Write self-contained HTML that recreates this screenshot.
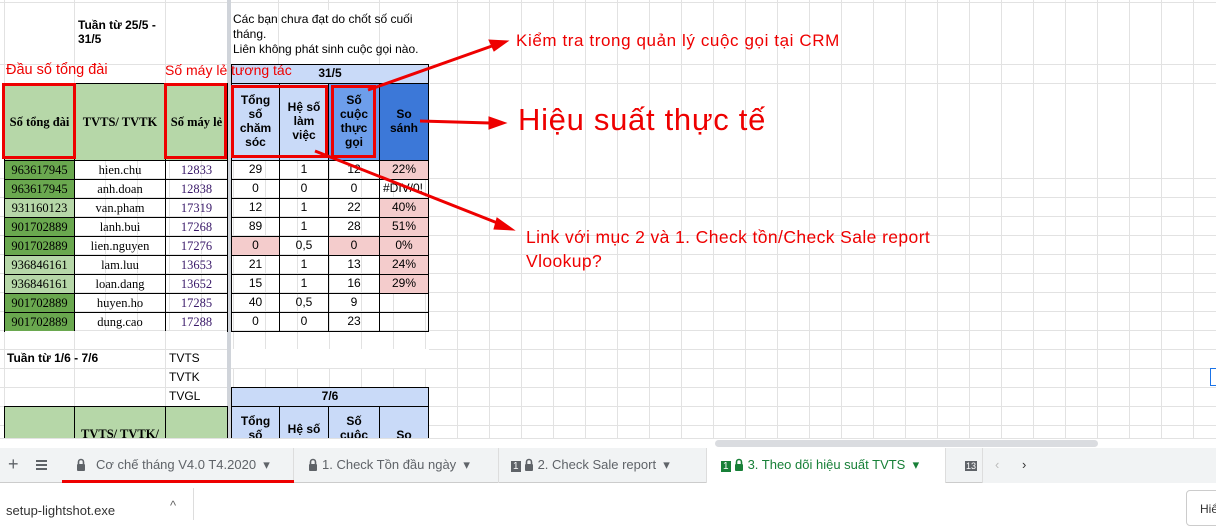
<!DOCTYPE html><html><head><meta charset="utf-8"><style>
*{margin:0;padding:0;box-sizing:border-box}
body{width:1216px;height:520px;overflow:hidden;background:#fff;position:relative;font-family:"Liberation Sans",sans-serif}
.grid{position:absolute;left:0;top:0;width:1216px;height:438px;
background-image:repeating-linear-gradient(to right,transparent 0 31px,#e2e2e2 31px 32px),repeating-linear-gradient(to bottom,transparent 0 18px,#e2e2e2 18px 19px);
background-position:426px 160px,0 160px;}
.c{position:absolute;display:flex;align-items:center;justify-content:center;text-align:center;font-size:12px;color:#000;overflow:hidden;line-height:1.15}
.s{font-family:"Liberation Serif",serif;font-size:12.5px}
.b{border:1px solid #000}
.ann{position:absolute;color:#e00;font-family:"Liberation Sans",sans-serif;white-space:nowrap}
.box{position:absolute;border:3px solid #e00}
.lk{display:inline-block;width:10px;height:13px;vertical-align:-2px;margin-right:4px}
</style></head><body>
<div class="grid"></div>
<div style="position:absolute;left:0;top:0;width:1216px;height:160px;background:#fff"></div>
<div style="position:absolute;left:0;top:2px;width:1216px;height:1px;background:#e2e2e2"></div>
<div style="position:absolute;left:0;top:64px;width:1216px;height:1px;background:#e2e2e2"></div>
<div style="position:absolute;left:0;top:83px;width:1216px;height:1px;background:#e2e2e2"></div>
<div style="position:absolute;left:0;top:0;width:1216px;height:160px;background-image:repeating-linear-gradient(to right,transparent 0 31px,#e2e2e2 31px 32px);background-position:426px 0"></div>
<div style="position:absolute;left:0;top:0;width:430px;height:160px;background:#fff"></div>
<div style="position:absolute;left:4px;top:0;width:1px;height:438px;background:#e2e2e2"></div>
<div style="position:absolute;left:74px;top:0;width:1px;height:84px;background:#e2e2e2"></div>
<div style="position:absolute;left:165px;top:0;width:1px;height:84px;background:#e2e2e2"></div>
<div style="position:absolute;left:0;top:2px;width:430px;height:1px;background:#e2e2e2"></div>
<div style="position:absolute;left:0;top:64px;width:430px;height:1px;background:#e2e2e2"></div>
<div style="position:absolute;left:278px;top:0;width:1px;height:64px;background:#e2e2e2"></div>
<div style="position:absolute;left:328px;top:0;width:1px;height:10px;background:#e2e2e2"></div>
<div style="position:absolute;left:379px;top:0;width:1px;height:64px;background:#e2e2e2"></div>
<div style="position:absolute;left:227px;top:0;width:4px;height:438px;background:#d0d4da"></div>

<div class="c" style="left:78px;top:15px;width:90px;height:36px;justify-content:flex-start;text-align:left;font-weight:bold">Tuần từ 25/5 -<br>31/5</div>
<div class="c" style="left:233px;top:10px;width:200px;height:48px;justify-content:flex-start;text-align:left;font-size:12px;line-height:15px">Các bạn chưa đạt do chốt số cuối<br>tháng.<br>Liên không phát sinh cuộc gọi nào.</div>

<div class="c b" style="left:231px;top:64px;width:198px;height:20px;background:#c9daf8;font-weight:bold">31/5</div>
<div class="c b s" style="left:4px;top:83px;width:71px;height:78px;background:#b6d7a8;font-weight:bold">Số tổng đài</div>
<div class="c b s" style="left:74px;top:83px;width:92px;height:78px;background:#b6d7a8;font-weight:bold">TVTS/ TVTK</div>
<div class="c b s" style="left:165px;top:83px;width:63px;height:78px;background:#b6d7a8;font-weight:bold">Số máy lẻ</div>
<div class="c b" style="left:231px;top:83px;width:49px;height:78px;background:#c9daf8;font-weight:bold">Tổng<br>số<br>chăm<br>sóc</div>
<div class="c b" style="left:279px;top:83px;width:50px;height:78px;background:#c9daf8;font-weight:bold">Hệ số<br>làm<br>việc</div>
<div class="c b" style="left:328px;top:83px;width:52px;height:78px;background:#6d9eeb;font-weight:bold">Số<br>cuộc<br>thực<br>gọi</div>
<div class="c b" style="left:379px;top:83px;width:50px;height:78px;background:#3c78d8;font-weight:bold">So<br>sánh</div>

<div class="c b s" style="left:4px;top:160px;width:71px;height:20px;background:#6aa84f">963617945</div><div class="c b s" style="left:74px;top:160px;width:92px;height:20px">hien.chu</div><div class="c b s" style="left:165px;top:160px;width:63px;height:20px;color:#3a1a6a">12833</div><div class="c b" style="left:231px;top:160px;width:49px;height:20px">29</div><div class="c b" style="left:279px;top:160px;width:50px;height:20px">1</div><div class="c b" style="left:328px;top:160px;width:52px;height:20px">12</div><div class="c b" style="left:379px;top:160px;width:50px;height:20px;background:#f4cccc">22%</div>
<div class="c b s" style="left:4px;top:179px;width:71px;height:20px;background:#6aa84f">963617945</div><div class="c b s" style="left:74px;top:179px;width:92px;height:20px">anh.doan</div><div class="c b s" style="left:165px;top:179px;width:63px;height:20px;color:#3a1a6a">12838</div><div class="c b" style="left:231px;top:179px;width:49px;height:20px">0</div><div class="c b" style="left:279px;top:179px;width:50px;height:20px">0</div><div class="c b" style="left:328px;top:179px;width:52px;height:20px">0</div><div class="c b" style="left:379px;top:179px;width:50px;height:20px;justify-content:flex-start;padding-left:3px">#DIV/0!</div>
<div class="c b s" style="left:4px;top:198px;width:71px;height:20px;background:#b6d7a8">931160123</div><div class="c b s" style="left:74px;top:198px;width:92px;height:20px">van.pham</div><div class="c b s" style="left:165px;top:198px;width:63px;height:20px;color:#3a1a6a">17319</div><div class="c b" style="left:231px;top:198px;width:49px;height:20px">12</div><div class="c b" style="left:279px;top:198px;width:50px;height:20px">1</div><div class="c b" style="left:328px;top:198px;width:52px;height:20px">22</div><div class="c b" style="left:379px;top:198px;width:50px;height:20px;background:#f4cccc">40%</div>
<div class="c b s" style="left:4px;top:217px;width:71px;height:20px;background:#6aa84f">901702889</div><div class="c b s" style="left:74px;top:217px;width:92px;height:20px">lanh.bui</div><div class="c b s" style="left:165px;top:217px;width:63px;height:20px;color:#3a1a6a">17268</div><div class="c b" style="left:231px;top:217px;width:49px;height:20px">89</div><div class="c b" style="left:279px;top:217px;width:50px;height:20px">1</div><div class="c b" style="left:328px;top:217px;width:52px;height:20px">28</div><div class="c b" style="left:379px;top:217px;width:50px;height:20px;background:#f4cccc">51%</div>
<div class="c b s" style="left:4px;top:236px;width:71px;height:20px;background:#6aa84f">901702889</div><div class="c b s" style="left:74px;top:236px;width:92px;height:20px">lien.nguyen</div><div class="c b s" style="left:165px;top:236px;width:63px;height:20px;color:#3a1a6a">17276</div><div class="c b" style="left:231px;top:236px;width:49px;height:20px;background:#f4cccc">0</div><div class="c b" style="left:279px;top:236px;width:50px;height:20px">0,5</div><div class="c b" style="left:328px;top:236px;width:52px;height:20px;background:#f4cccc">0</div><div class="c b" style="left:379px;top:236px;width:50px;height:20px;background:#f4cccc">0%</div>
<div class="c b s" style="left:4px;top:255px;width:71px;height:20px;background:#b6d7a8">936846161</div><div class="c b s" style="left:74px;top:255px;width:92px;height:20px">lam.luu</div><div class="c b s" style="left:165px;top:255px;width:63px;height:20px;color:#3a1a6a">13653</div><div class="c b" style="left:231px;top:255px;width:49px;height:20px">21</div><div class="c b" style="left:279px;top:255px;width:50px;height:20px">1</div><div class="c b" style="left:328px;top:255px;width:52px;height:20px">13</div><div class="c b" style="left:379px;top:255px;width:50px;height:20px;background:#f4cccc">24%</div>
<div class="c b s" style="left:4px;top:274px;width:71px;height:20px;background:#b6d7a8">936846161</div><div class="c b s" style="left:74px;top:274px;width:92px;height:20px">loan.dang</div><div class="c b s" style="left:165px;top:274px;width:63px;height:20px;color:#3a1a6a">13652</div><div class="c b" style="left:231px;top:274px;width:49px;height:20px">15</div><div class="c b" style="left:279px;top:274px;width:50px;height:20px">1</div><div class="c b" style="left:328px;top:274px;width:52px;height:20px">16</div><div class="c b" style="left:379px;top:274px;width:50px;height:20px;background:#f4cccc">29%</div>
<div class="c b s" style="left:4px;top:293px;width:71px;height:20px;background:#6aa84f">901702889</div><div class="c b s" style="left:74px;top:293px;width:92px;height:20px">huyen.ho</div><div class="c b s" style="left:165px;top:293px;width:63px;height:20px;color:#3a1a6a">17285</div><div class="c b" style="left:231px;top:293px;width:49px;height:20px">40</div><div class="c b" style="left:279px;top:293px;width:50px;height:20px">0,5</div><div class="c b" style="left:328px;top:293px;width:52px;height:20px">9</div><div class="c b" style="left:379px;top:293px;width:50px;height:20px"></div>
<div class="c b s" style="left:4px;top:312px;width:71px;height:20px;background:#6aa84f">901702889</div><div class="c b s" style="left:74px;top:312px;width:92px;height:20px">dung.cao</div><div class="c b s" style="left:165px;top:312px;width:63px;height:20px;color:#3a1a6a">17288</div><div class="c b" style="left:231px;top:312px;width:49px;height:20px">0</div><div class="c b" style="left:279px;top:312px;width:50px;height:20px">0</div><div class="c b" style="left:328px;top:312px;width:52px;height:20px">23</div><div class="c b" style="left:379px;top:312px;width:50px;height:20px"></div>

<div style="position:absolute;left:5px;top:331px;width:222px;height:107px;background:#fff;background-image:linear-gradient(#e2e2e2,#e2e2e2),linear-gradient(#e2e2e2,#e2e2e2),linear-gradient(to bottom,transparent 0 18px,#e2e2e2 18px 19px,transparent 19px 37px,#e2e2e2 37px 38px,transparent 38px 56px,#e2e2e2 56px 57px,transparent 57px 75px,#e2e2e2 75px 76px);background-size:1px 100%,1px 100%,100% 100%;background-position:69px 0,160px 0,0 0;background-repeat:no-repeat"></div>
<div style="position:absolute;left:231px;top:349px;width:198px;height:19px;background:#fff"></div>
<div class="c" style="left:7px;top:350px;width:120px;height:18px;justify-content:flex-start;font-weight:bold">Tuần từ 1/6 - 7/6</div>
<div class="c" style="left:169px;top:350px;width:50px;height:18px;justify-content:flex-start">TVTS</div>
<div class="c" style="left:169px;top:369px;width:50px;height:18px;justify-content:flex-start">TVTK</div>
<div class="c" style="left:169px;top:388px;width:50px;height:18px;justify-content:flex-start">TVGL</div>
<div class="c b" style="left:231px;top:387px;width:198px;height:20px;background:#c9daf8;font-weight:bold">7/6</div>
<div class="c b s" style="left:4px;top:406px;width:71px;height:40px;background:#b6d7a8"></div>
<div class="c b s" style="left:74px;top:406px;width:92px;height:40px;background:#b6d7a8;font-weight:bold;align-items:flex-start;padding-top:20px">TVTS/ TVTK/</div>
<div class="c b s" style="left:165px;top:406px;width:63px;height:40px;background:#b6d7a8"></div>
<div class="c b" style="left:231px;top:406px;width:49px;height:40px;background:#c9daf8;font-weight:bold;align-items:flex-start;padding-top:8px">Tổng<br>số</div>
<div class="c b" style="left:279px;top:406px;width:50px;height:40px;background:#c9daf8;font-weight:bold;align-items:flex-start;padding-top:16px">Hệ số</div>
<div class="c b" style="left:328px;top:406px;width:52px;height:40px;background:#c9daf8;font-weight:bold;align-items:flex-start;padding-top:8px">Số<br>cuộc</div>
<div class="c b" style="left:379px;top:406px;width:50px;height:40px;background:#c9daf8;font-weight:bold;align-items:flex-start;padding-top:22px">So</div>
<div style="position:absolute;left:1210px;top:368px;width:6px;height:18px;border:1px solid #1a73e8;border-right:none"></div>

<div style="position:absolute;left:0;top:438px;width:1216px;height:10px;background:#fff;border-top:1px solid #e2e2e2"></div>
<div style="position:absolute;left:715px;top:440px;width:383px;height:7px;background:#dadce0;border-radius:4px"></div>
<div style="position:absolute;left:0;top:448px;width:1216px;height:35px;background:#f1f3f4;border-bottom:1px solid #ccc;font-size:13px;color:#5f6368">
 <div style="position:absolute;left:8px;top:6px;font-size:18px">+</div>
 <div style="position:absolute;left:36px;top:12px;width:11px;height:2px;background:#5f6368;box-shadow:0 4px 0 #5f6368,0 8px 0 #5f6368"></div>
 <div style="position:absolute;left:62px;top:0;width:232px;height:35px;border-right:1px solid #ddd"></div>
 <div style="position:absolute;left:62px;top:32px;width:232px;height:3px;background:#e00"></div>
 <div style="position:absolute;left:76px;top:9px"><svg class="lk" viewBox="0 0 10 13"><path d="M2.5 6V4a2.5 2.5 0 0 1 5 0v2" fill="none" stroke="#5f6368" stroke-width="1.6"/><rect x="1" y="6" width="8" height="7" rx="1" fill="#5f6368"/></svg></div>
 <div style="position:absolute;left:96px;top:9px">Cơ chế tháng V4.0 T4.2020 &nbsp;▾</div>
 <div style="position:absolute;left:308px;top:9px"><svg class="lk" viewBox="0 0 10 13"><path d="M2.5 6V4a2.5 2.5 0 0 1 5 0v2" fill="none" stroke="#5f6368" stroke-width="1.6"/><rect x="1" y="6" width="8" height="7" rx="1" fill="#5f6368"/></svg>1. Check Tồn đầu ngày &nbsp;▾</div>
 <div style="position:absolute;left:498px;top:0;width:1px;height:35px;background:#ddd"></div>
 <div style="position:absolute;left:511px;top:9px"><span style="background:#5f6368;color:#fff;font-size:10px;padding:0 2px;margin-right:3px">1</span><svg class="lk" viewBox="0 0 10 13"><path d="M2.5 6V4a2.5 2.5 0 0 1 5 0v2" fill="none" stroke="#5f6368" stroke-width="1.6"/><rect x="1" y="6" width="8" height="7" rx="1" fill="#5f6368"/></svg>2. Check Sale report &nbsp;▾</div>
 <div style="position:absolute;left:706px;top:0;width:240px;height:35px;background:#fff;border-left:1px solid #ddd;border-right:1px solid #ddd"></div>
 <div style="position:absolute;left:721px;top:9px;color:#188038"><span style="background:#188038;color:#fff;font-size:10px;padding:0 2px;margin-right:3px">1</span><svg class="lk" viewBox="0 0 10 13"><path d="M2.5 6V4a2.5 2.5 0 0 1 5 0v2" fill="none" stroke="#188038" stroke-width="1.6"/><rect x="1" y="6" width="8" height="7" rx="1" fill="#188038"/></svg>3. Theo dõi hiệu suất TVTS &nbsp;▾</div>
 <div style="position:absolute;left:965px;top:9px"><span style="background:#5f6368;color:#fff;font-size:9px;padding:0 1px">13</span></div>
 <div style="position:absolute;left:982px;top:0;width:234px;height:35px;background:#f1f3f4;border-left:1px solid #ddd"></div>
 <div style="position:absolute;left:995px;top:9px;color:#bbb">‹</div>
 <div style="position:absolute;left:1022px;top:9px;color:#333">›</div>
</div>
<div style="position:absolute;left:0;top:484px;width:1216px;height:36px;background:#fff;font-size:13px;color:#333">
 <div style="position:absolute;left:6px;top:19px">setup-lightshot.exe</div>
 <div style="position:absolute;left:170px;top:14px;color:#666">^</div>
 <div style="position:absolute;left:193px;top:4px;width:1px;height:32px;background:#ddd"></div>
 <div style="position:absolute;left:1186px;top:6px;width:40px;height:36px;border:1px solid #ccc;border-radius:4px;padding:11px 0 0 13px;font-size:12px">Hiể</div>
</div>

<div class="ann" style="left:6px;top:62px;font-size:14.5px">Đầu số tổng đài</div>
<div class="ann" style="left:165px;top:62px;font-size:14px">Số máy lẻ tương tác</div>
<div class="ann" style="left:516px;top:31px;font-size:17px;letter-spacing:0.6px">Kiểm tra trong quản lý cuộc gọi tại CRM</div>
<div class="ann" style="left:518px;top:102px;font-size:31px;letter-spacing:0.7px">Hiệu suất thực tế</div>
<div class="ann" style="left:526px;top:225px;font-size:17.5px;line-height:24px;letter-spacing:0.4px">Link với mục 2 và 1. Check tồn/Check Sale report<br>Vlookup?</div>
<div class="box" style="left:2px;top:83px;width:74px;height:76px"></div>
<div class="box" style="left:164px;top:83px;width:63px;height:76px"></div>
<div class="box" style="left:231px;top:85px;width:97px;height:73px"></div>
<div class="box" style="left:331px;top:85px;width:45px;height:73px"></div>
<svg style="position:absolute;left:0;top:0" width="1216" height="520">
 <g stroke="#e00" stroke-width="3" fill="#e00">
  <line x1="368" y1="90" x2="492" y2="46"/>
  <polygon points="508,41 489,40 494,51" stroke-width="1"/>
  <line x1="420" y1="121" x2="490" y2="123"/>
  <polygon points="506,123 489,117 489,129" stroke-width="1"/>
  <line x1="315" y1="151" x2="500" y2="224"/>
  <polygon points="514,230 497,218 494,229" stroke-width="1"/>
 </g>
</svg>
</body></html>
